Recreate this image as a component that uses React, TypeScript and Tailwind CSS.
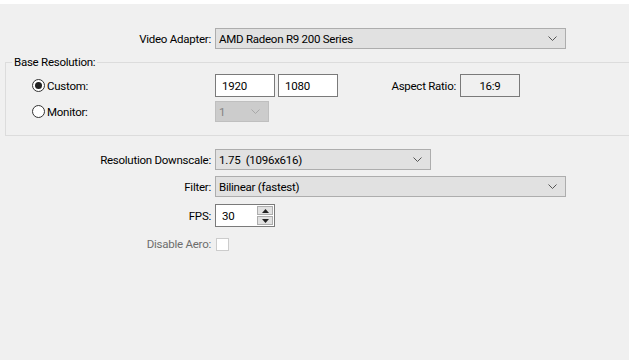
import { useState } from 'react'

function Chevron({ color }: { color: string }) {
  return (
    <svg width="9" height="6" viewBox="0 0 9 6" className="shrink-0">
      <path d="M0.5 0.5 L4.5 4.5 L8.5 0.5" fill="none" stroke={color} strokeWidth="1" />
    </svg>
  )
}

function Combo({ value, width, disabled }: { value: string; width: string; disabled?: boolean }) {
  return (
    <div
      className={`${width} h-[21px] flex items-center justify-between pl-[3px] pr-[8px] border ${
        disabled ? 'bg-[#cccccc] border-[#bfbfbf] text-[#838383]' : 'bg-[#e1e1e1] border-[#adadad] text-black'
      }`}
    >
      <span className="whitespace-pre">{value}</span>
      <Chevron color={disabled ? '#a8a8a8' : '#555'} />
    </div>
  )
}

function TextBox({ value }: { value: string }) {
  return (
    <div className="w-[60px] h-[23px] flex items-center pl-[6px] bg-white border border-[#7a7a7a] text-black">
      {value}
    </div>
  )
}

function Radio({ checked, label, onClick }: { checked: boolean; label: string; onClick: () => void }) {
  return (
    <button onClick={onClick} className="flex items-center gap-[2px] text-black">
      <span className="w-[13px] h-[13px] rounded-full border border-[#333] bg-white flex items-center justify-center">
        {checked && <span className="w-[7px] h-[7px] rounded-full bg-[#222]" />}
      </span>
      <span>{label}</span>
    </button>
  )
}

function Label({ children, dim }: { children: string; dim?: boolean }) {
  return <div className={`w-[212px] pr-[1px] text-right ${dim ? 'text-[#6d6d6d]' : 'text-black'}`}>{children}</div>
}

export default function App() {
  const [mode, setMode] = useState<'custom' | 'monitor'>('custom')

  return (
    <div
      className="w-[629px] h-[360px] overflow-hidden bg-[#f0f0f0] border-t-4 border-white text-[11.5px] leading-[16px] tracking-[-0.25px]"
      style={{ fontFamily: '"Segoe UI", Roboto, sans-serif' }}
    >
      {/* Video adapter */}
      <div className="mt-[24px] flex items-center">
        <Label>Video Adapter:</Label>
        <div className="ml-[3px]">
          <Combo value="AMD Radeon R9 200 Series" width="w-[351px]" />
        </div>
      </div>

      {/* Base resolution group */}
      <div className="relative mt-[13px] ml-[5px] h-[74px] border border-r-0 border-[#dcdcdc] pt-[11px]">
        <span className="absolute -top-[9px] left-[6px] px-[2px] bg-[#f0f0f0] text-black">Base Resolution:</span>

        <div className="flex items-center h-[23px]">
          <div className="w-[209px] pl-[26px]">
            <Radio checked={mode === 'custom'} label="Custom:" onClick={() => setMode('custom')} />
          </div>
          <TextBox value="1920" />
          <div className="ml-[3px]">
            <TextBox value="1080" />
          </div>
          <div className="w-[119px] text-right pr-[1px] text-black">Aspect Ratio:</div>
          <div className="ml-[3px] w-[60px] h-[23px] flex items-center justify-center border border-[#7a7a7a] bg-[#f0f0f0] text-black">
            16:9
          </div>
        </div>

        <div className="flex items-center h-[21px] mt-[4px]">
          <div className="w-[209px] pl-[26px]">
            <Radio checked={mode === 'monitor'} label="Monitor:" onClick={() => setMode('monitor')} />
          </div>
          <Combo value="1" width="w-[54px]" disabled />
        </div>
      </div>

      {/* Output options */}
      <div className="mt-[13px] flex items-center">
        <Label>Resolution Downscale:</Label>
        <div className="ml-[3px]">
          <Combo value="1.75  (1096x616)" width="w-[216px]" />
        </div>
      </div>

      <div className="mt-[6px] flex items-center">
        <Label>Filter:</Label>
        <div className="ml-[3px]">
          <Combo value="Bilinear (fastest)" width="w-[351px]" />
        </div>
      </div>

      <div className="mt-[7px] flex items-center">
        <Label>FPS:</Label>
        <div className="ml-[3px] w-[60px] h-[23px] flex items-center justify-between pl-[6px] pr-[1px] bg-white border border-[#7a7a7a] text-black">
          <span>30</span>
          <div className="flex flex-col gap-[1px]">
            <div className="w-[16px] h-[9px] flex items-center justify-center bg-[#e1e1e1] border border-[#adadad]">
              <svg width="7" height="4" viewBox="0 0 7 4">
                <path d="M0 4 L3.5 0 L7 4 Z" fill="#222" />
              </svg>
            </div>
            <div className="w-[16px] h-[9px] flex items-center justify-center bg-[#e1e1e1] border border-[#adadad]">
              <svg width="7" height="4" viewBox="0 0 7 4">
                <path d="M0 0 L3.5 4 L7 0 Z" fill="#222" />
              </svg>
            </div>
          </div>
        </div>
      </div>

      <div className="mt-[9px] flex items-center">
        <Label dim>Disable Aero:</Label>
        <div className="ml-[4px] w-[13px] h-[13px] bg-white border border-[#cccccc]" />
      </div>
    </div>
  )
}
